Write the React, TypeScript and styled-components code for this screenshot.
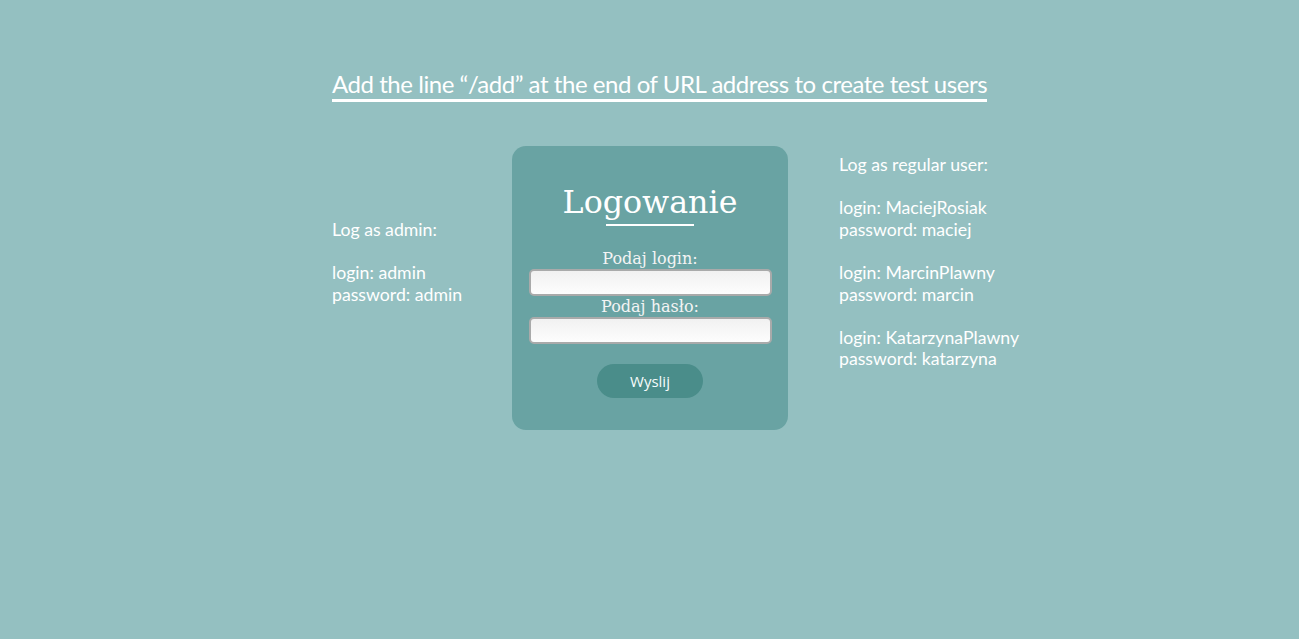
import React from "react";
import styled, { createGlobalStyle } from "styled-components";

const GlobalStyle = createGlobalStyle`
  html, body {
    margin: 0;
    padding: 0;
    background: #94c0c1;
  }
  body {
    min-height: 639px;
    font-family: Lato, "Liberation Sans", sans-serif;
    color: #ffffff;
  }
`;

const Page = styled.div`
  padding: 69px 0 0 332px;
`;

const Notice = styled.h1`
  display: inline-block;
  margin: 0;
  font-family: Lato, sans-serif;
  font-weight: 400;
  font-size: 24px;
  line-height: 30px;
  letter-spacing: -0.45px;
  border-bottom: 3px solid #ffffff;
`;

const Row = styled.div`
  display: flex;
  align-items: flex-start;
  margin-top: 44px;
`;

const Side = styled.div<{ $top: number; $width?: number }>`
  margin-top: ${(p) => p.$top}px;
  width: ${(p) => (p.$width ? `${p.$width}px` : "auto")};
  font-size: 17.7px;
  line-height: 21.6px;
`;

const Group = styled.p`
  margin: 0 0 21.6px;
`;

const Panel = styled.form`
  width: 276px;
  box-sizing: border-box;
  padding: 36px 16px 32px;
  background: #69a3a3;
  border-radius: 14px;
  display: flex;
  flex-direction: column;
  align-items: center;
  margin-right: 51px;
`;

const Title = styled.h2`
  margin: 0 0 21px;
  font-family: "DejaVu Serif", serif;
  font-weight: 400;
  font-size: 31.7px;
  line-height: 40px;
  position: relative;
  padding-bottom: 5px;
  &::after {
    content: "";
    position: absolute;
    left: 50%;
    bottom: 1px;
    width: 88px;
    height: 2px;
    margin-left: -44px;
    background: #ffffff;
  }
`;

const Label = styled.label`
  font-family: "DejaVu Serif", serif;
  font-size: 16px;
  line-height: 21px;
  color: #f4f4f4;
`;

const Field = styled.input`
  width: 243px;
  height: 27px;
  box-sizing: border-box;
  border: 2px solid #a9aaaa;
  border-radius: 5px;
  background: linear-gradient(to bottom, #f1f1f1, #fdfdfd);
  outline: none;
`;

const Button = styled.button`
  margin-top: 20px;
  width: 106px;
  height: 34px;
  border: none;
  border-radius: 17px;
  background: #4a8d8a;
  color: #f6fcfc;
  font-family: "Open Sans", sans-serif;
  font-size: 15px;
`;

const regular = [
  ["MaciejRosiak", "maciej"],
  ["MarcinPlawny", "marcin"],
  ["KatarzynaPlawny", "katarzyna"],
];

export default function App() {
  return (
    <Page>
      <GlobalStyle />
      <Notice>Add the line “/add” at the end of URL address to create test users</Notice>
      <Row>
        <Side $top={73} $width={180}>
          <Group>Log as admin:</Group>
          <Group>
            login: admin
            <br />
            password: admin
          </Group>
        </Side>
        <Panel onSubmit={(e) => e.preventDefault()}>
          <Title>Logowanie</Title>
          <Label>Podaj login:</Label>
          <Field type="text" />
          <Label>Podaj hasło:</Label>
          <Field type="password" />
          <Button type="submit">Wyslij</Button>
        </Panel>
        <Side $top={8}>
          <Group>Log as regular user:</Group>
          {regular.map(([login, pass]) => (
            <Group key={login}>
              login: {login}
              <br />
              password: {pass}
            </Group>
          ))}
        </Side>
      </Row>
    </Page>
  );
}
